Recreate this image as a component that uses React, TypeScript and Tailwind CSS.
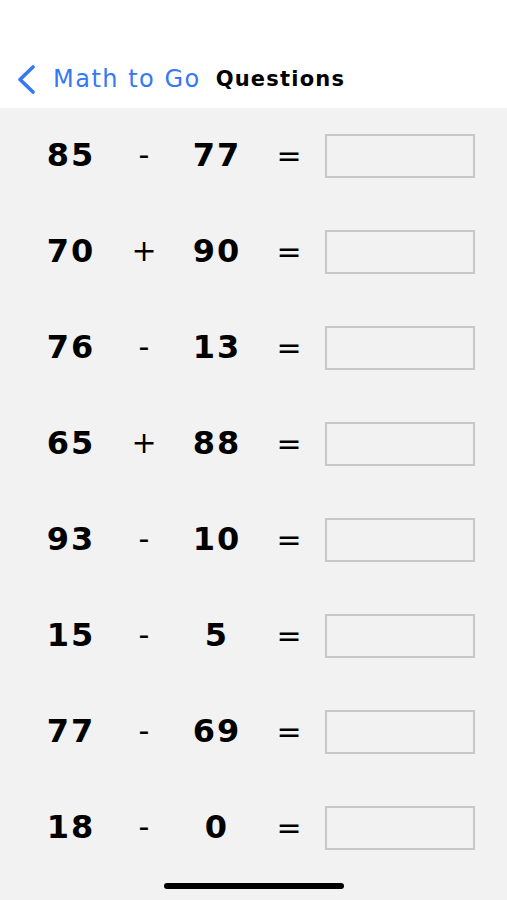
import React from "react";

const rows: [string, string, string][] = [
  ["85", "-", "77"],
  ["70", "+", "90"],
  ["76", "-", "13"],
  ["65", "+", "88"],
  ["93", "-", "10"],
  ["15", "-", "5"],
  ["77", "-", "69"],
  ["18", "-", "0"],
];

export default function App() {
  const font = { fontFamily: '"DejaVu Sans", sans-serif' };
  return (
    <div className="h-[900px] w-[507px] overflow-hidden bg-[#f2f2f2] flex flex-col" style={font}>
      <div className="h-[108px] bg-white pt-[57px] shrink-0">
        <div className="h-[44px] flex items-center">
          <svg width="24" height="30" viewBox="0 0 24 30" className="ml-[13px]">
            <polyline points="20,3 7,15.5 20,28" fill="none" stroke="#3478f6" strokeWidth="3.6" strokeLinecap="round" strokeLinejoin="round" />
          </svg>
          <span className="ml-[16px] text-[24px] tracking-[1.5px] text-[#3478f6] leading-none">Math to Go</span>
          <span className="ml-[15px] text-[21px] tracking-[1.2px] font-bold text-black leading-none">Questions</span>
        </div>
      </div>
      {rows.map(([a, op, b], i) => (
        <div key={i} className="h-[96px] shrink-0 flex items-center pl-[30px]">
          <span className="w-[82px] pb-[3px] text-center text-[32px] font-bold tracking-[2px] text-black leading-none">{a}</span>
          <span className="w-[64px] pb-[3px] text-center text-[30px] text-black leading-none">{op}</span>
          <span className="w-[82px] pb-[3px] text-center text-[32px] font-bold tracking-[2px] text-black leading-none">{b}</span>
          <span className="w-[62px] pb-[1px] text-center text-[30px] text-black leading-none">=</span>
          <div className="ml-[5px] w-[150px] h-[44px] border-2 border-[#c8c8c8] bg-[#f2f2f2]" />
        </div>
      ))}
      <div className="mt-[7px] mx-auto w-[180px] h-[6px] rounded-full bg-black shrink-0" />
    </div>
  );
}
